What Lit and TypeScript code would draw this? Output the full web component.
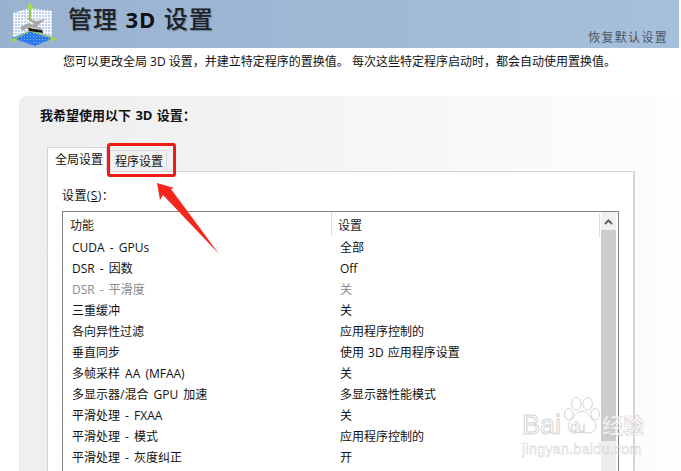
import { LitElement, html, css, svg } from "lit";
import { customElement } from "lit/decorators.js";

const rows: [string, string, boolean?][] = [
  ["CUDA - GPUs", "全部"],
  ["DSR - 因数", "Off"],
  ["DSR - 平滑度", "关", true],
  ["三重缓冲", "关"],
  ["各向异性过滤", "应用程序控制的"],
  ["垂直同步", "使用 3D 应用程序设置"],
  ["多帧采样 AA (MFAA)", "关"],
  ["多显示器/混合 GPU 加速", "多显示器性能模式"],
  ["平滑处理 - FXAA", "关"],
  ["平滑处理 - 模式", "应用程序控制的"],
  ["平滑处理 - 灰度纠正", "开"],
];

const logo = svg`<svg class="logo" width="60" height="48" viewBox="0 0 60 48">
  <defs>
    <pattern id="g" width="3" height="3" patternUnits="userSpaceOnUse">
      <rect width="3" height="3" fill="#fff"/><rect width="2" height="2" fill="#bcd0f6"/>
    </pattern>
    <pattern id="b" width="3" height="3" patternUnits="userSpaceOnUse">
      <rect width="3" height="3" fill="#2a78ee"/><rect width="1" height="1" fill="#7fb0f3"/>
    </pattern>
  </defs>
  <polygon points="13,13 30,8 30,30 13,38" fill="url(#g)"/>
  <polygon points="30,8 52,11 52,36 30,30" fill="url(#g)"/>
  <polygon points="12,38 30,31 54,38 35,46" fill="url(#b)"/>
  <path d="M30 6V30" stroke="#98cf3a" stroke-width="2"/>
  <path d="M26.5 9L30 2L33.500 9z" fill="#a9dc45"/>
  <path d="M12 40L30 31L55 39" stroke="#a5d845" stroke-width="1" fill="none"/>
  <path d="M10 41L17 37L16 42z M57 39L50 36L51 42z" fill="#a4d63f"/>
  <path d="M20 27L31 22L25 17L36 21L46 19L37 26L44 30L30 27L22 31z" fill="#a8a8a8"/>
  <path d="M24 19L33 24" stroke="#f2f2f2" stroke-width="2"/>
  <path d="M28 28L42 30L43 33L29 31z" fill="#161616"/>
</svg>`;

@customElement("app-root")
export class AppRoot extends LitElement {
  static styles = css`
    :host {
      display: block;
      position: relative;
      width: 681px;
      height: 471px;
      overflow: hidden;
      background: #fff;
      font-family: "Open Sans", "Noto Sans CJK SC", sans-serif;
      font-size: 12px;
      color: #111;
    }
    .banner {
      height: 48px;
      display: flex;
      align-items: flex-start;
      background: linear-gradient(90deg, #98b2d0, #a6bfda);
      margin-right: 2px;
    }
    .logo { flex: none; }
    .title {
      margin: 0 0 0 8px;
      font-family: "Noto Sans CJK SC", sans-serif;
      font-size: 24px;
      line-height: 35px;
      font-weight: 500;
      letter-spacing: 1px;
      word-spacing: 1px;
      color: #1d2328;
      text-shadow: 1px 1px 1px rgba(30, 40, 50, .35);
      white-space: nowrap;
    }
    .title b {
      font-family: "Open Sans", sans-serif;
      font-weight: 700;
      font-size: 22px;
      color: #0d1114;
      text-shadow: none;
    }
    .restore {
      margin-left: auto;
      margin-top: 29px;
      margin-right: 11px;
      font-size: 12px;
      line-height: 18px;
      letter-spacing: 1.3px;
      color: #4b5662;
      white-space: nowrap;
    }
    .intro {
      margin: 4px 0 0 63px;
      line-height: 20px;
      font-size: 12px;
      white-space: nowrap;
      height: 18px;
    }
    .panel {
      margin: 26px 0 0 19px;
      height: 400px;
      background: linear-gradient(90deg, #eeeeee, #fdfdfd);
      border-top-left-radius: 8px;
      box-sizing: border-box;
      padding: 10px 46px 0 21px;
    }
    .panel h2 {
      margin: 0;
      font-size: 13px;
      font-weight: 700;
      line-height: 18px;
      height: 40px;
      word-spacing: 1px;
      white-space: nowrap;
    }
    .tabs { display: flex; margin-left: 7px; align-items: flex-end; height: 25px; }
    .tab {
      box-sizing: border-box;
      font-size: 12px;
      line-height: 18px;
      white-space: nowrap;
    }
    .tab.on {
      width: 60px;
      height: 25px;
      background: #fff;
      border: 1px solid #d6d6d6;
      border-bottom: 0;
      padding: 3px 0 0 7px;
      position: relative;
      top: 1px;
    }
    .tab.off {
      width: 57px;
      height: 21px;
      margin-left: 3px;
      background: #f0f0f0;
      border: 1px solid #d9d9d9;
      border-bottom: 0;
      padding: 2px 0 0 4px;
    }
    .pane {
      margin-left: 7px;
      height: 320px;
      box-sizing: border-box;
      background: #fff;
      border: 1px solid #d6d6d6;
      border-right-width: 2px;
      padding: 14px 15px 0 14px;
    }
    .label { line-height: 20px; height: 25px; letter-spacing: .4px; }
    .label u { text-underline-offset: 1px; }
    .list {
      height: 300px;
      border: 1px solid #7d8287;
      border-bottom: 0;
      display: flex;
      box-sizing: border-box;
      width: 557px;
    }
    .table { flex: 1; min-width: 0; }
    .head {
      display: grid;
      grid-template-columns: 261px 1fr;
      grid-template-rows: 24px;
      height: 24px;
      line-height: 28px;
      padding-left: 7px;
      color: #222;
    }
    .head span + span {
      border-left: 1px solid #dcdcdc;
      padding-left: 6px;
    }
    .row {
      display: grid;
      grid-template-columns: 268px 1fr;
      height: 21px;
      line-height: 23px;
      padding-left: 9px;
    }
    .row span { white-space: nowrap; word-spacing: 2px; }
    .row span + span { word-spacing: 1px; }
    .row.dim { color: #8a8a8a; }
    .scroll {
      position: relative;
      width: 15px;
      margin-right: 2px;
      background: #ededed;
      border-left: 1px solid #fff;
      display: flex;
      flex-direction: column;
    }
    .scroll::before {
      content: "";
      position: absolute;
      left: -2px;
      top: 1px;
      width: 1px;
      height: 24px;
      background: #dddddd;
    }
    .up {
      margin-top: 1px;
      height: 17px;
      background: #f0f0f0;
      display: flex;
      align-items: center;
      justify-content: center;
    }
    .thumb { height: 211px; background: #cdcdcd; }
    .marker {
      position: absolute;
      left: 107px;
      top: 143px;
      width: 69px;
      height: 34px;
      box-sizing: border-box;
      border: 3px solid #ee1c14;
      border-radius: 3px;
    }
    .arrow { position: absolute; left: 150px; top: 175px; }
    .mark {
      position: absolute;
      left: 522px;
      top: 395px;
      width: 125px;
      height: 62px;
      font-family: "Liberation Sans", sans-serif;
    }
    .mark .paw { position: absolute; left: 41px; top: 1px; }
    .mark .bai {
      position: absolute;
      left: 0;
      top: 15px;
      font-size: 27px;
      line-height: 30px;
      color: rgba(255, 255, 255, .45);
      -webkit-text-stroke: 1px rgba(200, 200, 200, .8);
    }
    .mark .du {
      position: absolute;
      left: 48px;
      top: 24px;
      font-size: 14px;
      line-height: 16px;
      color: transparent;
      -webkit-text-stroke: .6px rgba(200, 200, 200, .85);
    }
    .mark .cn {
      position: absolute;
      left: 80px;
      top: 16px;
      font-family: "Noto Sans CJK SC", sans-serif;
      font-weight: 700;
      font-size: 21px;
      line-height: 26px;
      color: rgba(255, 255, 255, .7);
      -webkit-text-stroke: .6px rgba(200, 200, 200, .85);
    }
    .mark .url {
      position: absolute;
      left: 0;
      top: 46px;
      font-size: 14px;
      line-height: 17px;
      letter-spacing: .4px;
      color: rgba(255, 255, 255, .5);
      -webkit-text-stroke: .5px rgba(200, 200, 200, .85);
      white-space: nowrap;
    }
  `;

  render() {
    return html`
      <header class="banner">
        ${logo}
        <h1 class="title">管理 <b>3D</b> 设置</h1>
        <span class="restore">恢复默认设置</span>
      </header>
      <p class="intro">您可以更改全局 3D 设置，并建立特定程序的置换值。 每次这些特定程序启动时，都会自动使用置换值。</p>
      <section class="panel">
        <h2>我希望使用以下 3D 设置：</h2>
        <div class="tabs">
          <div class="tab on">全局设置</div>
          <div class="tab off">程序设置</div>
        </div>
        <div class="pane">
          <div class="label">设置(<u>S</u>)：</div>
          <div class="list">
            <div class="table">
              <div class="head"><span>功能</span><span>设置</span></div>
              ${rows.map(
                ([a, b, dim]) => html`<div class="row ${dim ? "dim" : ""}"><span>${a}</span><span>${b}</span></div>`
              )}
            </div>
            <div class="scroll">
              <div class="up">
                <svg width="9" height="6" viewBox="0 0 9 6"><path d="M1 5L4.5 1.500L8 5" fill="none" stroke="#606060" stroke-width="2"/></svg>
              </div>
              <div class="thumb"></div>
            </div>
          </div>
        </div>
      </section>
      <div class="marker"></div>
      <svg class="arrow" width="75" height="85" viewBox="0 0 75 85">
        <polygon points="7,8 24,13 21,14 69,79 13,20 10,25" fill="#f5261c"/>
      </svg>
      <div class="mark">
        <svg class="paw" width="38" height="40" viewBox="0 0 40 40" fill="rgba(255,255,255,.45)" stroke="rgba(200,200,200,.85)">
          <ellipse cx="6" cy="18" rx="4.500" ry="6"/>
          <ellipse cx="14" cy="7" rx="5" ry="6.500"/>
          <ellipse cx="26" cy="7" rx="5" ry="6.500"/>
          <ellipse cx="34" cy="18" rx="4.500" ry="6"/>
          <path d="M20 15c6 0 8 6 13 11c4 5 0 13-7 12c-4-1-8-1-12 0c-7 1-11-7-7-12c5-5 7-11 13-11z"/>
        </svg>
        <span class="bai">Bai</span>
        <span class="du">du</span>
        <span class="cn">经验</span>
        <span class="url">jingyan.baidu.com</span>
      </div>
    `;
  }
}
